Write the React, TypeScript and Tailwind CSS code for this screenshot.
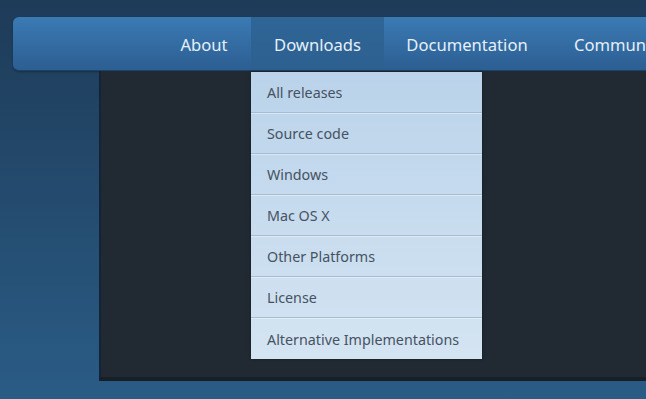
import React from "react";

const items = [
  "All releases",
  "Source code",
  "Windows",
  "Mac OS X",
  "Other Platforms",
  "License",
  "Alternative Implementations",
];

export default function App() {
  return (
    <div
      className="relative w-[646px] h-[399px] overflow-hidden bg-gradient-to-b from-[#1e3b58] to-[#2a5c86]"
      style={{ fontFamily: '"Noto Sans", "Open Sans", sans-serif' }}
    >
      <div className="pt-[17px] pl-[13px]">
        <div className="h-[54px] w-[700px] rounded-l-[6px] bg-gradient-to-b from-[#3b7ab4] to-[#2c5f92] border-b border-[#1d4266] shadow-[0_1px_2px_rgba(0,0,0,0.3)] flex pl-[144px] text-[16.6px] text-[#e6f0fa]">
          <div className="w-[94px] pt-[4px] flex items-center justify-center">About</div>
          <div className="w-[133px] pt-[4px] flex items-center justify-center bg-gradient-to-b from-[#2f6697] to-[#2c6090]">Downloads</div>
          <div className="w-[166px] pt-[4px] flex items-center justify-center">Documentation</div>
          <div className="px-6 pt-[4px] flex items-center">Community</div>
        </div>
        <div className="ml-[86px] h-[310px] w-[600px] bg-[#212a33] border-l-2 border-[#13233a] border-b-4 border-b-[#171f27]">
        </div>
      </div>
      <div className="absolute left-[251px] top-[72px] w-[231px] bg-gradient-to-b from-[#bad3ea] to-[#d4e4f2] shadow-[0_0_3px_rgba(0,0,0,0.4)]">
        {items.map((t, i) => (
          <div
            key={t}
            className={
              "h-[41px] flex items-center pl-4 pt-[2px] text-[14.3px] text-[#465262] " +
              (i < items.length - 1 ? "border-b border-[#a6bcd2] shadow-[0_1px_0_rgba(255,255,255,0.4)]" : "")
            }
          >
            {t}
          </div>
        ))}
      </div>
    </div>
  );
}
